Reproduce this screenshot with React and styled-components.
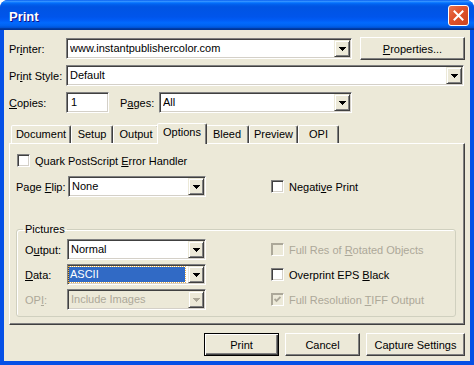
import React from "react";
import styled, { createGlobalStyle, css } from "styled-components";

const GlobalStyle = createGlobalStyle`
  html, body {
    margin: 0;
    padding: 0;
    background: #fff;
  }
  body {
    font-family: "Liberation Sans", Arial, sans-serif;
    font-size: 11px;
    color: #000;
  }
  * {
    box-sizing: border-box;
  }
`;

const Window = styled.div`
  width: 474px;
  height: 365px;
  display: flex;
  flex-direction: column;
  background: #0550e6;
  border-radius: 8px 8px 0 0;
  overflow: hidden;
`;

const TitleBar = styled.div`
  height: 30px;
  flex: none;
  display: flex;
  align-items: center;
  justify-content: space-between;
  padding: 0 5px 0 9px;
  background: linear-gradient(
    to bottom,
    #0058ee 0%,
    #3a93ff 4%,
    #288eff 6%,
    #127dff 8%,
    #036ffc 10%,
    #0262ee 14%,
    #0057e5 20%,
    #0054e3 24%,
    #0055eb 56%,
    #005bf5 66%,
    #026afe 76%,
    #0062ef 86%,
    #0052d6 92%,
    #0040ab 94%,
    #003092 100%
  );
`;

const Title = styled.span`
  padding-top: 2px;
  color: #fff;
  font-family: "Liberation Sans", Arial, sans-serif;
  font-weight: bold;
  font-size: 13px;
  text-shadow: 1px 1px #0f1089;
`;

const CloseButton = styled.div`
  width: 21px;
  height: 21px;
  border: 1px solid #fff;
  border-radius: 3px;
  background: linear-gradient(135deg, #e8734f 0%, #e0542c 40%, #cc431f 100%);
  display: flex;
  align-items: center;
  justify-content: center;
`;

const Body = styled.div`
  flex: 1;
  margin: 0 4px 4px;
  background: #ece9d8;
  padding: 7px 5px 0 5px;
  display: flex;
  flex-direction: column;
`;

const FormRow = styled.div`
  display: flex;
  align-items: center;
  height: ${(p) => p.$h || 21}px;
  margin-bottom: ${(p) => p.$mb || 0}px;
`;

const Label = styled.span`
  width: ${(p) => p.$w}px;
  flex: none;
  white-space: nowrap;
  color: ${(p) => (p.$disabled ? "#aca899" : "#000")};
  margin-left: ${(p) => p.$ml || 0}px;
`;

const Sunken = css`
  border: 1px solid;
  border-color: #808080 #fff #fff #808080;
  box-shadow: inset 1px 1px #404040, inset -1px -1px #d4d0c8;
`;

const Raised = css`
  border: 1px solid;
  border-color: #fff #404040 #404040 #fff;
  box-shadow: inset -1px -1px #808080;
`;

const Combo = styled.div`
  ${Sunken};
  width: ${(p) => p.$w}px;
  height: 21px;
  flex: none;
  display: flex;
  align-items: center;
  padding: 1px 1px 1px 3px;
  background: ${(p) => (p.$disabled ? "#ece9d8" : "#fff")};
  color: ${(p) => (p.$disabled ? "#aca899" : "#000")};
`;

const ComboValue = styled.span`
  flex: 1;
  height: 15px;
  line-height: 15px;
  white-space: nowrap;
  overflow: hidden;
  ${(p) =>
    p.$selected &&
    css`
      margin: 0 3px 0 -2px;
      padding-left: 1px;
      background: #316ac5;
      color: #fff;
      outline: 1px dotted #e8b04a;
    `}
`;

const DropButton = styled.span`
  width: 16px;
  height: 17px;
  flex: none;
  margin-left: auto;
  background: #ece9d8;
  border: 1px solid;
  border-color: #ece9d8 #404040 #404040 #ece9d8;
  box-shadow: inset 1px 1px #fff, inset -1px -1px #808080;
  display: flex;
  align-items: center;
  justify-content: center;
`;

const TextBox = styled.div`
  ${Sunken};
  width: ${(p) => p.$w}px;
  height: 21px;
  flex: none;
  background: #fff;
  padding: 3px 0 0 4px;
`;

const PushButton = styled.button`
  ${Raised};
  width: ${(p) => p.$w}px;
  height: 23px;
  flex: none;
  background: #ece9d8;
  font: inherit;
  color: #000;
  padding: 0;
  margin-left: ${(p) => p.$ml || 0}px;
  ${(p) =>
    p.$default &&
    css`
      border-color: #000;
      box-shadow: inset 1px 1px #fff, inset -1px -1px #404040, inset -2px -2px #808080;
    `}
`;

const TabStrip = styled.div`
  display: flex;
  align-items: flex-end;
  height: 20px;
  margin-top: 10px;
  padding-left: 2px;
`;

const Tab = styled.div`
  width: ${(p) => p.$w + (p.$active ? 4 : 0)}px;
  height: ${(p) => (p.$active ? 21 : 18)}px;
  margin: 0 ${(p) => (p.$active ? -2 : 0)}px ${(p) => (p.$active ? -1 : 0)}px;
  position: relative;
  z-index: ${(p) => (p.$active ? 2 : 1)};
  background: #ece9d8;
  border: 1px solid;
  border-bottom: none;
  border-color: #fff #404040 transparent #fff;
  box-shadow: inset -1px 0 #808080;
  border-radius: 2px 2px 0 0;
  text-align: center;
  padding-top: 2px;
  line-height: 13px;
`;

const Panel = styled.div`
  ${Raised};
  height: 182px;
  flex: none;
  padding: 10px 8px 0 6px;
`;

const PanelGrid = styled.div`
  display: grid;
  grid-template-columns: ${(p) => p.$left}px 1fr;
  align-items: center;
  row-gap: ${(p) => p.$gap}px;
`;

const Check = styled.div`
  display: flex;
  align-items: center;
  gap: 5px;
  margin-left: ${(p) => p.$ml || 0}px;
  color: ${(p) => (p.$disabled ? "#aca899" : "#000")};
  white-space: nowrap;
`;

const CheckBox = styled.span`
  ${Sunken};
  width: 13px;
  height: 13px;
  flex: none;
  background: ${(p) => (p.$disabled ? "#ece9d8" : "#fff")};
  display: flex;
  align-items: center;
  justify-content: center;
  ${(p) =>
    p.$disabled &&
    css`
      border-color: #aca899 #fff #fff #aca899;
      box-shadow: inset 1px 1px #aca899;
    `}
`;

const Group = styled.fieldset`
  margin: 26px 0 0;
  padding: 3px 8px 6px 8px;
  border: 1px solid #d0d0bf;
  border-radius: 3px;
  box-shadow: inset 1px 1px #fff;
`;

const Legend = styled.legend`
  padding: 0 2px;
  margin-left: -2px;
  line-height: 13px;
`;

const ButtonBar = styled.div`
  display: flex;
  justify-content: flex-end;
  gap: 6px;
  margin-top: 8px;
`;

const Arrow = ({ disabled }) => (
  <svg width="7" height="4" viewBox="0 0 7 4" shapeRendering="crispEdges">
    <polygon points="0,0 7,0 3.5,4" fill={disabled ? "#aca899" : "#000"} />
  </svg>
);

const Dropdown = ({ w, value, disabled, selected }) => (
  <Combo $w={w} $disabled={disabled}>
    <ComboValue $selected={selected}>{value}</ComboValue>
    <DropButton>
      <Arrow disabled={disabled} />
    </DropButton>
  </Combo>
);

const CheckItem = ({ children, disabled, checked, ml }) => (
  <Check $disabled={disabled} $ml={ml}>
    <CheckBox $disabled={disabled}>
      {checked && (
        <svg width="7" height="7" viewBox="0 0 7 7">
          <polyline points="0.5,3 2.5,5 6.5,1" fill="none" stroke={disabled ? "#aca899" : "#000"} strokeWidth="1.8" />
        </svg>
      )}
    </CheckBox>
    <span>{children}</span>
  </Check>
);

const tabs = [
  { name: "Document", w: 60 },
  { name: "Setup", w: 42 },
  { name: "Output", w: 46 },
  { name: "Options", w: 46, active: true },
  { name: "Bleed", w: 44 },
  { name: "Preview", w: 49 },
  { name: "OPI", w: 41 },
];

export default function App() {
  return (
    <>
      <GlobalStyle />
      <Window>
        <TitleBar>
          <Title>Print</Title>
          <CloseButton>
            <svg width="11" height="11" viewBox="0 0 11 11">
              <path d="M1.5 1.5 L9.5 9.5 M9.5 1.5 L1.5 9.5" stroke="#fff" strokeWidth="2" strokeLinecap="square" />
            </svg>
          </CloseButton>
        </TitleBar>
        <Body>
          <FormRow $h={23} $mb={5}>
            <Label $w={57}>
              Pr<u>i</u>nter:
            </Label>
            <Dropdown w={286} value="www.instantpublishercolor.com" />
            <PushButton $w={105} $ml={8}>
              <u>P</u>roperties...
            </PushButton>
          </FormRow>
          <FormRow $mb={6}>
            <Label $w={57}>
              Pr<u>i</u>nt Style:
            </Label>
            <Dropdown w={398} value="Default" />
          </FormRow>
          <FormRow>
            <Label $w={57}>
              <u>C</u>opies:
            </Label>
            <TextBox $w={43}>1</TextBox>
            <Label $w={39} $ml={11}>
              P<u>a</u>ges:
            </Label>
            <Dropdown w={193} value="All" />
          </FormRow>
          <TabStrip>
            {tabs.map((t) => (
              <Tab key={t.name} $w={t.w} $active={t.active}>
                {t.name}
              </Tab>
            ))}
          </TabStrip>
          <Panel>
            <PanelGrid $left={255} $gap={9}>
              <CheckItem ml={1}>
                Quark PostScript <u>E</u>rror Handler
              </CheckItem>
              <span />
              <FormRow>
                <Label $w={52}>
                  Page <u>F</u>lip:
                </Label>
                <Dropdown w={138} value="None" />
              </FormRow>
              <CheckItem>
                Negati<u>v</u>e Print
              </CheckItem>
            </PanelGrid>
            <Group>
              <Legend>Pictures</Legend>
              <PanelGrid $left={246} $gap={4}>
                <FormRow>
                  <Label $w={42}>
                    O<u>u</u>tput:
                  </Label>
                  <Dropdown w={139} value="Normal" />
                </FormRow>
                <CheckItem disabled>
                  Full Res of <u>R</u>otated Objects
                </CheckItem>
                <FormRow>
                  <Label $w={42}>
                    <u>D</u>ata:
                  </Label>
                  <Dropdown w={139} value="ASCII" selected />
                </FormRow>
                <CheckItem>
                  Overprint EPS <u>B</u>lack
                </CheckItem>
                <FormRow>
                  <Label $w={42} $disabled>
                    OP<u>I</u>:
                  </Label>
                  <Dropdown w={139} value="Include Images" disabled />
                </FormRow>
                <CheckItem disabled checked>
                  Full Resolution <u>T</u>IFF Output
                </CheckItem>
              </PanelGrid>
            </Group>
          </Panel>
          <ButtonBar>
            <PushButton $w={75} $default>
              Print
            </PushButton>
            <PushButton $w={75}>Cancel</PushButton>
            <PushButton $w={99}>Capture Settings</PushButton>
          </ButtonBar>
        </Body>
      </Window>
    </>
  );
}
